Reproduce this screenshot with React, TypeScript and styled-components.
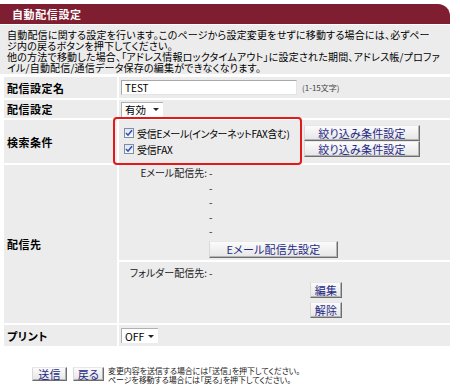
import React from 'react';
import styled, { createGlobalStyle } from 'styled-components';

const GlobalStyle = createGlobalStyle`
  *, *::before, *::after { box-sizing: border-box; }
  html, body { margin: 0; padding: 0; background: #fff; }
  body {
    font-family: "Noto Sans CJK JP", "Noto Sans", sans-serif;
    color: #000;
    font-feature-settings: "palt";
  }
`;

const Page = styled.div`
  width: 450px;
  padding-top: 4px;
`;

const Header = styled.div`
  height: 20px;
  background: #7f1e31;
  border-top-right-radius: 12px;
  color: #fff;
  font-weight: bold;
  font-size: 11px;
  line-height: 20px;
  padding-left: 12px;
  letter-spacing: 0.6px;
`;

const Description = styled.div`
  margin-top: 1px;
  height: 49px;
  background: #ececec;
  padding: 4px 7px 0;
  font-size: 10px;
  line-height: 11px;
  letter-spacing: 0.2px;
`;

const Line = styled.div`
  white-space: nowrap;
  height: 11px;
`;

const Table = styled.div`
  margin-top: 3px;
  margin-left: 4px;
  display: grid;
  grid-template-columns: 113px 331px;
  grid-template-rows: 21px 18px 43px 158px 21px;
  gap: 2px;
`;

const LabelCell = styled.div`
  background: #ececec;
  display: flex;
  align-items: center;
  padding-left: 3px;
  font-weight: bold;
  font-size: 11px;
  letter-spacing: 0.5px;
`;

const ValueCell = styled.div`
  background: #ececec;
  display: flex;
  align-items: center;
  padding: 0 2px;
  position: relative;
  font-size: 10px;
`;

const TextInput = styled.div`
  width: 176px;
  height: 15px;
  background: #fff;
  border-top: 1px solid #a8a8a8;
  border-left: 1px solid #a8a8a8;
  border-right: 1px solid #e4e4e4;
  border-bottom: 1px solid #e4e4e4;
  font-size: 10px;
  line-height: 13px;
  padding-left: 3px;
`;

const Hint = styled.span`
  margin-left: 5px;
  font-size: 8px;
  color: #444;
`;

const Select = styled.div<{ $w: number }>`
  width: ${(p) => p.$w}px;
  height: 15px;
  background: #fff;
  border-top: 1px solid #b0b0b0;
  border-left: 1px solid #b0b0b0;
  display: flex;
  align-items: center;
  justify-content: space-between;
  padding: 0 4px 0 3px;
  font-size: 10.5px;
`;

const Caret = styled.span`
  width: 0;
  height: 0;
  border-left: 3px solid transparent;
  border-right: 3px solid transparent;
  border-top: 3px solid #222;
`;

const SearchGrid = styled.div`
  display: grid;
  grid-template-columns: 183px 116px;
  grid-auto-rows: 16px;
  align-self: flex-start;
  margin-top: 5px;
`;

const CheckRow = styled.label`
  display: flex;
  align-items: center;
  gap: 3px;
  padding-left: 3px;
  font-size: 10px;
  letter-spacing: -0.3px;
  white-space: nowrap;
`;

const Box = styled.span`
  width: 10px;
  height: 10px;
  border: 1px solid #7f8ea8;
  background: linear-gradient(#dfe6f2, #f6f8fc);
  display: inline-flex;
  align-items: center;
  justify-content: center;
`;

const Highlight = styled.div`
  position: absolute;
  left: -6px;
  top: -3px;
  width: 189px;
  height: 48px;
  border: 2px solid #e01a1a;
  border-radius: 4px;
  z-index: 1;
  pointer-events: none;
`;

const Btn = styled.button<{ $w: number; $h?: number }>`
  width: ${(p) => p.$w}px;
  height: ${(p) => p.$h ?? 16}px;
  padding: 0;
  margin: 0;
  background: linear-gradient(#fbfbfb, #e6e6e6);
  border: 1px solid;
  border-color: #e8e8e8 #6e6e6e #6e6e6e #d8d8d8;
  box-shadow: inset -1px -1px 0 #b4b4b4;
  color: #262a86;
  font-family: inherit;
  font-feature-settings: "palt";
  font-size: 11px;
  line-height: 12px;
  letter-spacing: 0.2px;
  white-space: nowrap;
`;

const DestCell = styled.div`
  display: flex;
  flex-direction: column;
  gap: 2px;
`;

const SubBlock = styled.div<{ $h: number; $pt: number }>`
  height: ${(p) => p.$h}px;
  background: #ececec;
  padding: ${(p) => p.$pt}px 2px 0;
  display: grid;
  grid-template-columns: 86px 1fr;
  column-gap: 2px;
  align-content: start;
  font-size: 10px;
`;

const DestLabel = styled.div`
  text-align: right;
  line-height: 14.5px;
  white-space: nowrap;
  color: #222;
`;

const DestValue = styled.div`
  line-height: 14.5px;
  color: #222;
`;

const BtnSlot = styled.div<{ $ml: number; $mt: number }>`
  grid-column: 2;
  margin-left: ${(p) => p.$ml}px;
  margin-top: ${(p) => p.$mt}px;
  display: flex;
  flex-direction: column;
  gap: 4px;
  align-items: flex-start;
`;

const Footer = styled.div`
  margin-top: 21px;
  padding-left: 32px;
  display: flex;
  align-items: flex-start;
  gap: 6px;
`;

const Note = styled.div`
  margin-left: -2px;
  font-size: 8px;
  line-height: 8.5px;
  letter-spacing: -0.1px;
  color: #222;
  white-space: nowrap;
`;

const Check = () => (
  <Box>
    <svg width="8" height="8" viewBox="0 0 8 8">
      <path d="M1 4 L3 6.2 L7 1.2" fill="none" stroke="#2b4ea8" strokeWidth="1.5" />
    </svg>
  </Box>
);

export default function App() {
  return (
    <>
      <GlobalStyle />
      <Page>
        <Header>自動配信設定</Header>
        <Description>
          <Line>自動配信に関する設定を行います。このページから設定変更をせずに移動する場合には、必ずペー</Line>
          <Line>ジ内の戻るボタンを押下してください。</Line>
          <Line>他の方法で移動した場合、「アドレス情報ロックタイムアウト」に設定された期間、アドレス帳/プロファ</Line>
          <Line>イル/自動配信/通信データ保存の編集ができなくなります。</Line>
        </Description>
        <Table>
          <LabelCell>配信設定名</LabelCell>
          <ValueCell>
            <TextInput>TEST</TextInput>
            <Hint>(1-15文字)</Hint>
          </ValueCell>

          <LabelCell>配信設定</LabelCell>
          <ValueCell>
            <Select $w={42}>
              有効 <Caret />
            </Select>
          </ValueCell>

          <LabelCell>検索条件</LabelCell>
          <ValueCell>
            <Highlight />
            <SearchGrid>
              <CheckRow>
                <Check />
                受信Eメール(インターネットFAX含む)
              </CheckRow>
              <Btn $w={116}>絞り込み条件設定</Btn>
              <CheckRow>
                <Check />
                受信FAX
              </CheckRow>
              <Btn $w={116}>絞り込み条件設定</Btn>
            </SearchGrid>
          </ValueCell>

          <LabelCell>配信先</LabelCell>
          <DestCell>
            <SubBlock $h={95} $pt={1}>
              <DestLabel>Eメール配信先:</DestLabel>
              <DestValue>-</DestValue>
              <DestLabel />
              <DestValue>-</DestValue>
              <DestLabel />
              <DestValue>-</DestValue>
              <DestLabel />
              <DestValue>-</DestValue>
              <DestLabel />
              <DestValue>-</DestValue>
              <BtnSlot $ml={0} $mt={2}>
                <Btn $w={129} $h={17}>Eメール配信先設定</Btn>
              </BtnSlot>
            </SubBlock>
            <SubBlock $h={61} $pt={4}>
              <DestLabel>フォルダー配信先:</DestLabel>
              <DestValue>-</DestValue>
              <BtnSlot $ml={101} $mt={1}>
                <Btn $w={32}>編集</Btn>
                <Btn $w={32}>解除</Btn>
              </BtnSlot>
            </SubBlock>
          </DestCell>

          <LabelCell>プリント</LabelCell>
          <ValueCell>
            <Select $w={37}>
              OFF <Caret />
            </Select>
          </ValueCell>
        </Table>
        <Footer>
          <Btn $w={35} $h={14}>送信</Btn>
          <Btn $w={31} $h={14}>戻る</Btn>
          <Note>
            <div>変更内容を送信する場合には「送信」を押下してください。</div>
            <div>ページを移動する場合には「戻る」を押下してください。</div>
          </Note>
        </Footer>
      </Page>
    </>
  );
}
